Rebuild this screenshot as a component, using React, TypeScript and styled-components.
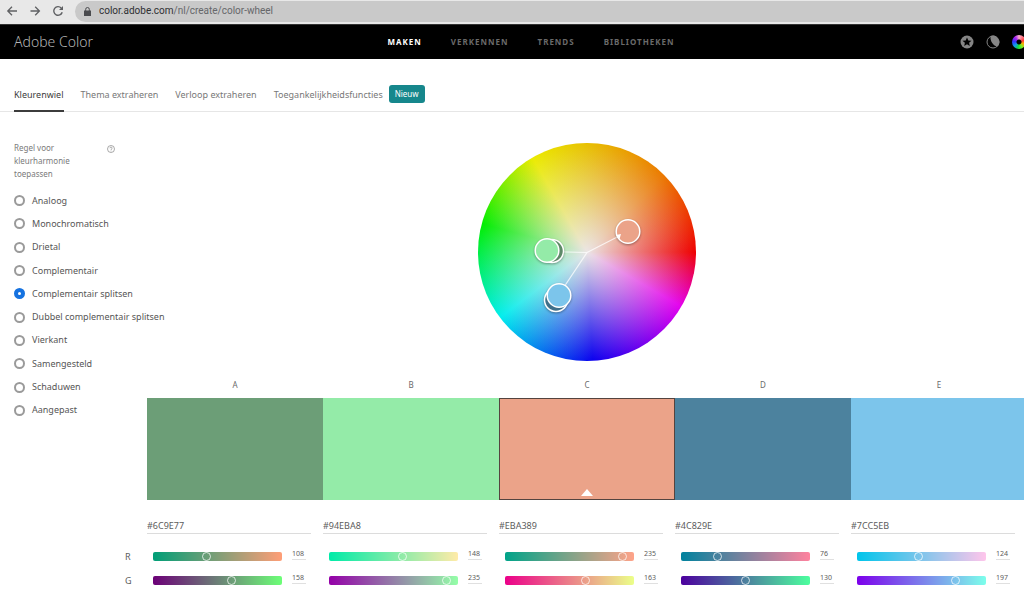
import React, { useState } from "react";
import styled, { createGlobalStyle } from "styled-components";

const GlobalStyle = createGlobalStyle`
  *, *::before, *::after { box-sizing: border-box; }
  html { overflow: hidden; }
  body {
    margin: 0;
    background: #fff;
    color: #5c5c5c;
    font-family: "Noto Sans", "Open Sans", sans-serif;
    font-size: 9px;
    line-height: 12px;
    overflow-x: hidden;
  }
  button, input { font: inherit; color: inherit; margin: 0; padding: 0; border: 0; background: none; }
  a { color: inherit; text-decoration: none; }
`;

/* Browser chrome */

const BrowserBar = styled.div`
  display: flex;
  align-items: center;
  gap: 9px;
  height: 24px;
  padding: 0 0 2px 5px;
  background: #e8e8e8;
`;

const BrowserButton = styled.button`
  display: flex;
  width: 14px;
  height: 14px;
  color: #5f6063;
  svg { width: 14px; height: 14px; }
`;

const AddressBar = styled.div`
  flex: 1;
  display: flex;
  align-items: center;
  gap: 8px;
  height: 21px;
  margin-left: 1px;
  padding-left: 9px;
  border-radius: 11px 0 0 11px;
  background: #c9c9c9;
  font-family: Roboto, sans-serif;
  font-size: 10px;
  color: #66676a;
  svg { width: 7px; height: 9px; flex: none; }
`;

const Address = styled.span`
  b { font-weight: 400; color: #2f3033; }
`;

/* Site header */

const Header = styled.header`
  display: grid;
  grid-template-columns: 1fr auto 1fr;
  align-items: center;
  height: 35px;
  padding-left: 14px;
  border-top: 1px solid #333;
  background: #000;
`;

const Brand = styled.a`
  font-size: 14px;
  font-weight: 300;
  color: #b4b4b4;
`;

const MainNav = styled.nav`
  display: flex;
  gap: 29px;
  margin-left: 24px;
`;

const MainNavLink = styled.a<{ $active?: boolean }>`
  font-size: 8px;
  font-weight: 700;
  letter-spacing: 1px;
  color: ${(p) => (p.$active ? "#fff" : "#6a6a6a")};
`;

const HeaderTools = styled.div`
  display: flex;
  justify-content: flex-end;
  gap: 12px;
  margin-right: -2px;
`;

const ToolButton = styled.button`
  display: flex;
  width: 14px;
  height: 14px;
  svg { width: 14px; height: 14px; }
`;

const Avatar = styled.button`
  width: 14px;
  height: 14px;
  border-radius: 50%;
  background:
    radial-gradient(circle, #000 0 2px, transparent 3px),
    conic-gradient(#f9b0cc, #f33 70deg, #fa0 110deg, #7e2 150deg, #1d4 190deg, #19e 230deg, #33f 275deg, #a2e 320deg, #f9b0cc);
`;

/* Tabs */

const Tabs = styled.nav`
  display: flex;
  align-items: stretch;
  gap: 17px;
  height: 53px;
  padding: 17px 0 0 14px;
  border-bottom: 1px solid #e6e6e6;
`;

const Tab = styled.a<{ $active?: boolean }>`
  display: flex;
  align-items: flex-start;
  gap: 6px;
  margin-bottom: -1px;
  padding-top: 13px;
  white-space: nowrap;
  border-bottom: 2px solid ${(p) => (p.$active ? "#3c3c3c" : "transparent")};
  color: ${(p) => (p.$active ? "#3c3c3c" : "#787878")};
`;

const Badge = styled.span`
  margin-top: -4px;
  padding: 3px 6px;
  border-radius: 3px;
  background: #16878c;
  color: #fff;
  font-size: 8px;
`;

/* Workspace */

const Page = styled.main`
  margin-right: -3px;
`;

const Workspace = styled.div`
  display: grid;
  grid-template-columns: 147px minmax(0, 1fr);
  padding-top: 29px;
`;

const Rules = styled.fieldset`
  min-width: 0;
  margin: 0;
  padding: 0 0 0 14px;
  border: 0;
`;

const RulesHead = styled.div`
  display: flex;
  justify-content: space-between;
  align-items: flex-start;
  padding-right: 32px;
  font-size: 8px;
  line-height: 13px;
  color: #7a7a7a;
`;

const RulesTitle = styled.span`
  width: 64px;
`;

const HelpButton = styled.button`
  display: flex;
  margin-top: 4px;
  svg { width: 8px; height: 8px; }
`;

const RuleList = styled.div`
  display: grid;
  grid-auto-rows: 1fr;
  height: 233px;
  margin-top: 9px;
`;

const RuleLabel = styled.label`
  display: flex;
  align-items: center;
  gap: 7px;
  white-space: nowrap;
  color: #565656;
`;

const Radio = styled.input`
  appearance: none;
  flex: none;
  width: 11px;
  height: 11px;
  border: 2px solid #9a9a9a;
  border-radius: 50%;
  background: #fff;
  &:checked { border: 4px solid #1572e0; }
`;

const Wheel = styled.div`
  position: relative;
  width: 218px;
  height: 218px;
  margin: 2px auto 0;
  border-radius: 50%;
  background:
    radial-gradient(circle closest-side, #ebe5e5, rgba(235, 229, 229, 0) 100%),
    conic-gradient(
      #e8c000, #eb7800 45deg, #ee0000 90deg, #e400ee 120deg, #0a00ee 177deg,
      #00eeee 233deg, #00ee00 285deg, #ebeb00 330deg, #e8c000
    );
`;

const WheelOverlay = styled.svg`
  position: absolute;
  inset: 0;
  width: 100%;
  height: 100%;
  overflow: visible;
`;

const Pins = styled.g`
  filter: drop-shadow(0 1px 1px rgba(0, 0, 0, 0.35));
`;

const Columns = styled.div`
  display: grid;
  grid-template-columns: repeat(5, minmax(0, 1fr));
`;

const Swatches = styled(Columns)`
  margin-top: 18px;
`;

const SwatchCell = styled.div`
  display: flex;
  flex-direction: column;
  text-align: center;
  font-size: 8px;
  color: #6a6a6a;
`;

const Swatch = styled.button<{ $color: string; $active: boolean }>`
  display: flex;
  align-items: flex-end;
  justify-content: center;
  height: 102px;
  margin-top: 7px;
  padding-bottom: 3px;
  background: ${(p) => p.$color};
  border: 1px solid ${(p) => (p.$active ? "#54443f" : p.$color)};
  svg { width: 12px; height: 7px; }
`;

const ChannelRow = styled.div`
  display: grid;
  grid-template-columns: 147px minmax(0, 1fr);
`;

const HexInput = styled.input`
  width: auto;
  height: 15px;
  margin: 19px 12px 11px 0;
  padding-bottom: 2px;
  border-bottom: 1px solid #dcdcdc;
  outline: none;
`;

const ChannelName = styled.span`
  align-self: center;
  padding-left: 125px;
`;

const ChannelCell = styled.div`
  display: flex;
  align-items: center;
  gap: 10px;
  height: 23px;
  padding: 0 17px 0 6px;
  margin-bottom: 1px;
`;

const Track = styled.div<{ $from: string; $to: string }>`
  flex: 1;
  display: flex;
  height: 9px;
  border-radius: 2px;
  background: linear-gradient(to right, ${(p) => p.$from}, ${(p) => p.$to});
`;

const Range = styled.input`
  appearance: none;
  flex: 1;
  min-width: 0;
  height: 9px;
  margin: 0 -3px 0 -6px;
  &::-webkit-slider-thumb {
    appearance: none;
    width: 9px;
    height: 9px;
    border: 1px solid rgba(255, 255, 255, 0.75);
    border-radius: 50%;
    background: transparent;
  }
`;

const ValueInput = styled.input`
  width: 14px;
  height: 11px;
  margin-bottom: 4px;
  border-bottom: 1px solid #e0e0e0;
  font-size: 7px;
  outline: none;
`;

const tabs = ["Kleurenwiel", "Thema extraheren", "Verloop extraheren"];
const sections = ["MAKEN", "VERKENNEN", "TRENDS", "BIBLIOTHEKEN"];
const rules = [
  "Analoog", "Monochromatisch", "Drietal", "Complementair", "Complementair splitsen",
  "Dubbel complementair splitsen", "Vierkant", "Samengesteld", "Schaduwen", "Aangepast",
];

type Rgb = [number, number, number];
const theme: { name: string; rgb: Rgb }[] = [
  { name: "A", rgb: [108, 158, 119] },
  { name: "B", rgb: [148, 235, 168] },
  { name: "C", rgb: [235, 163, 137] },
  { name: "D", rgb: [76, 130, 158] },
  { name: "E", rgb: [124, 197, 235] },
];

const toHex = (rgb: Rgb) =>
  "#" + rgb.map((v) => v.toString(16).padStart(2, "0")).join("").toUpperCase();

const withChannel = (rgb: Rgb, channel: number, value: number): Rgb =>
  rgb.map((v, i) => (i === channel ? value : v)) as Rgb;

export default function App() {
  const [rule, setRule] = useState("Complementair splitsen");
  const [active, setActive] = useState(2);
  const [colors, setColors] = useState(theme);

  const setChannel = (index: number, channel: number, value: number) =>
    setColors((list) =>
      list.map((c, i) => (i === index ? { ...c, rgb: withChannel(c.rgb, channel, value) } : c))
    );

  return (
    <>
      <GlobalStyle />
      <BrowserBar>
        <BrowserButton aria-label="Vorige">
          <svg viewBox="0 0 14 14" fill="none" stroke="currentColor" strokeWidth="1.3"><path d="M12 7H3M7 2.8 2.8 7 7 11.2" /></svg>
        </BrowserButton>
        <BrowserButton aria-label="Volgende">
          <svg viewBox="0 0 14 14" fill="none" stroke="currentColor" strokeWidth="1.3"><path d="M2.500 7H11.200M7.200 2.800 11.400 7 7.200 11.200" /></svg>
        </BrowserButton>
        <BrowserButton aria-label="Vernieuwen">
          <svg viewBox="0 0 14 14" fill="none" stroke="currentColor" strokeWidth="1.4"><path d="M11.200 8.200A4.300 4.300 0 1 1 10.200 4" /><path d="M12 2v4H8z" fill="currentColor" stroke="none" /></svg>
        </BrowserButton>
        <AddressBar>
          <svg viewBox="0 0 7 9"><path d="M0 3.500h7V9H0z" fill="#4a4b4e" /><path d="M1.700 4V2.300a1.800 1.800 0 0 1 3.600 0V4" fill="none" stroke="#4a4b4e" /></svg>
          <Address><b>color.adobe.com</b>/nl/create/color-wheel</Address>
        </AddressBar>
      </BrowserBar>

      <Header>
        <Brand href="#">Adobe Color</Brand>
        <MainNav>
          {sections.map((s, i) => (
            <MainNavLink key={s} href="#" $active={i === 0}>{s}</MainNavLink>
          ))}
        </MainNav>
        <HeaderTools>
          <ToolButton aria-label="Favorieten">
            <svg viewBox="0 0 14 14"><circle cx="7" cy="7" r="6.500" fill="#858585" /><path d="M7 2.400l1.300 3 3.200.3-2.400 2.100.7 3.200L7 9.300 4.200 11l.7-3.200L2.500 5.700l3.200-.3z" fill="#000" /></svg>
          </ToolButton>
          <ToolButton aria-label="Thema">
            <svg viewBox="0 0 14 14"><circle cx="7" cy="7" r="6" fill="none" stroke="#858585" /><path d="M4.500 1C4 5 6 10 11.200 11.800A6.500 6.500 0 0 0 4.500 1z" fill="#858585" /></svg>
          </ToolButton>
          <Avatar aria-label="Profiel" />
        </HeaderTools>
      </Header>

      <Tabs>
        {tabs.map((t, i) => (
          <Tab key={t} href="#" $active={i === 0}>{t}</Tab>
        ))}
        <Tab href="#">Toegankelijkheidsfuncties<Badge>Nieuw</Badge></Tab>
      </Tabs>

      <Page>
        <Workspace>
          <Rules aria-label="Regel voor kleurharmonie toepassen">
            <RulesHead>
              <RulesTitle>Regel voor kleurharmonie toepassen</RulesTitle>
              <HelpButton aria-label="Help">
                <svg viewBox="0 0 8 8" fill="none" stroke="#858585" strokeWidth=".7"><circle cx="4" cy="4" r="3.500" /><path d="M2.900 3.200a1.100 1.100 0 1 1 1.600 1c-.4.200-.5.400-.5.800M4 5.600v.7" /></svg>
              </HelpButton>
            </RulesHead>
            <RuleList>
              {rules.map((r) => (
                <RuleLabel key={r}>
                  <Radio type="radio" name="rule" checked={rule === r} onChange={() => setRule(r)} />
                  {r}
                </RuleLabel>
              ))}
            </RuleList>
          </Rules>

          <div>
            <Wheel>
              <WheelOverlay viewBox="0 0 218 218">
                <g stroke="#fff" strokeOpacity=".75" strokeWidth="1.200">
                  <path d="M109 109.500 150 88.500M109 109.500 69 108.500M109 109.500 80 153" fill="none" />
                </g>
                <Pins stroke="#fff" strokeWidth="1.500">
                  <circle cx="74" cy="108" r="11.500" fill="#5d8a68" />
                  <circle cx="69" cy="107.500" r="11.800" fill="#94eba8" />
                  <circle cx="78" cy="157" r="11.500" fill="#40708a" />
                  <circle cx="81" cy="152.500" r="11.800" fill="#7cc5eb" />
                  <circle cx="150" cy="88.500" r="11.800" fill="#eba389" />
                </Pins>
                <path d="M138 92l5-1-1.500 5z" fill="#fff" />
              </WheelOverlay>
            </Wheel>
            <Swatches>
              {colors.map((c, i) => (
                <SwatchCell key={c.name}>
                  {c.name}
                  <Swatch
                    aria-label={"Kleur " + c.name}
                    $color={toHex(c.rgb)}
                    $active={i === active}
                    onClick={() => setActive(i)}
                  >
                    {i === active && <svg viewBox="0 0 12 7"><path d="M0 7 6 0l6 7z" fill="#fff" /></svg>}
                  </Swatch>
                </SwatchCell>
              ))}
            </Swatches>
          </div>
        </Workspace>

        <ChannelRow>
          <span />
          <Columns>
            {colors.map((c) => (
              <HexInput key={c.name} aria-label={"Hex " + c.name} value={toHex(c.rgb)} readOnly />
            ))}
          </Columns>
        </ChannelRow>

        {["R", "G"].map((channel, ch) => (
          <ChannelRow key={channel}>
            <ChannelName>{channel}</ChannelName>
            <Columns>
              {colors.map((c, i) => (
                <ChannelCell key={c.name}>
                  <Track $from={toHex(withChannel(c.rgb, ch, 0))} $to={toHex(withChannel(c.rgb, ch, 255))}>
                    <Range
                      type="range" min={0} max={255} value={c.rgb[ch]}
                      aria-label={channel + " " + c.name}
                      onChange={(e) => setChannel(i, ch, Number(e.target.value))}
                    />
                  </Track>
                  <ValueInput
                    aria-label={channel + " waarde " + c.name}
                    value={c.rgb[ch]}
                    onChange={(e) => setChannel(i, ch, Math.min(255, Number(e.target.value) || 0))}
                  />
                </ChannelCell>
              ))}
            </Columns>
          </ChannelRow>
        ))}
      </Page>
    </>
  );
}
